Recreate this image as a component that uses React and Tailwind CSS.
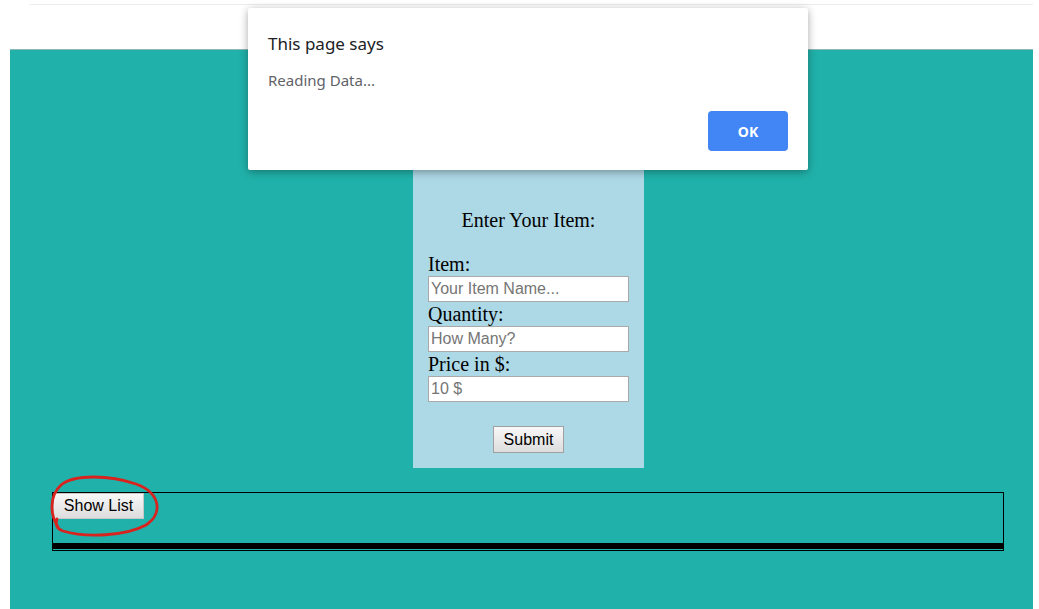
import { useState } from 'react';

/**
 * Shopping list page with the browser's "Reading Data..." alert on top
 */

function Field({ label, placeholder }) {
  return (
    <div>
      <label className="block h-[24px] text-[20px] leading-[24px]">{label}</label>
      <input
        type="text"
        placeholder={placeholder}
        className="block h-[26px] w-[201px] border border-[#a9a9a9] bg-white px-[2px] font-['Liberation_Sans',Arial,sans-serif] text-[16px] text-black outline-none placeholder:text-[#757575]"
      />
    </div>
  );
}

export default function App() {
  const [open, setOpen] = useState(true);

  return (
    <div className="relative h-[609px] w-[1039px] overflow-hidden bg-white font-['Liberation_Serif','Times_New_Roman',serif] text-black">
      {/* Top strip */}
      <div className="h-[49px] pl-[30px] pr-[6px] pt-[4px]">
        <div className="h-px bg-[#ececec]" />
      </div>

      {/* Teal page */}
      <div className="ml-[10px] mr-[6px] h-[560px] border-t border-[#8fb7b3] bg-[#20b2aa] pt-[119px]">
        {/* Form panel */}
        <div className="ml-[403px] h-[299px] w-[231px] bg-[#add8e6] px-[15px] pb-[15px] pt-[39px]">
          <h3 className="h-[24px] text-center text-[20px] leading-[24px]">Enter Your Item:</h3>
          <div className="mt-[20px]">
            <Field label="Item:" placeholder="Your Item Name..." />
            <Field label="Quantity:" placeholder="How Many?" />
            <Field label="Price in $:" placeholder="10 $" />
          </div>
          <div className="mt-[24px] flex justify-center">
            <button
              type="button"
              className="h-[27px] w-[71px] border border-[#a0a0a0] bg-gradient-to-b from-[#f8f8f8] to-[#dddddd] font-['Liberation_Sans',Arial,sans-serif] text-[16px] leading-none"
            >
              Submit
            </button>
          </div>
        </div>

        {/* List box */}
        <div className="ml-[42px] mt-[24px] flex h-[59px] w-[952px] flex-col justify-between border border-black pb-px">
          <button
            type="button"
            className="h-[26px] w-[91px] border border-[#c8c8c8] bg-gradient-to-b from-[#f8f8f8] to-[#dddddd] font-['Liberation_Sans',Arial,sans-serif] text-[16px] leading-none"
          >
            Show List
          </button>
          <div className="h-[6px] bg-black" />
        </div>
      </div>

      {/* Red hand-drawn circle */}
      <svg className="pointer-events-none absolute left-0 top-0" width="1039" height="609" viewBox="0 0 1039 609">
        <path
          d="M58 527 C50 515 49 496 61 485 C74 474 110 475 136 484 C161 493 163 514 146 525 C126 536 86 538 63 531 C57 529 55 525 57 519"
          fill="none"
          stroke="#d8231f"
          strokeWidth="2.8"
          strokeLinecap="round"
        />
      </svg>

      {/* Alert dialog */}
      {open && (
        <div className="absolute left-[248px] top-[8px] h-[162px] w-[560px] rounded-[2px] bg-white px-[20px] pt-[24px] font-['Noto_Sans','Open_Sans',sans-serif] shadow-[0_2px_8px_rgba(0,0,0,0.35)]">
          <div className="text-[17px] leading-[24px] text-[#202124]">This page says</div>
          <div className="mt-[14px] text-[15px] leading-[20px] text-[#5f6368]">Reading Data...</div>
          <div className="mt-[21px] flex justify-end">
            <button
              type="button"
              onClick={() => setOpen(false)}
              className="h-[40px] w-[80px] rounded-[4px] bg-[#4285f4] text-[14px] font-bold text-white"
            >
              OK
            </button>
          </div>
        </div>
      )}
    </div>
  );
}
